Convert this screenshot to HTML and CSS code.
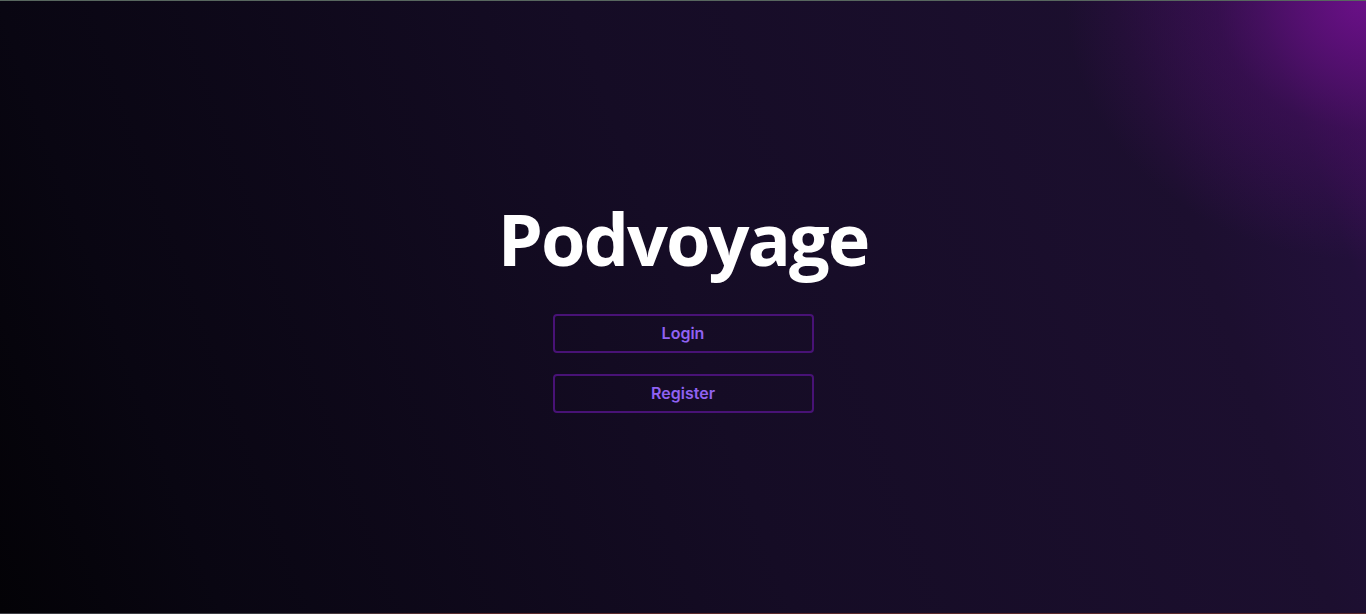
FILE: index.html
```html
<!DOCTYPE html>
<html lang="en">
<head>
<meta charset="utf-8">
<title>Podvoyage</title>
<link rel="stylesheet" href="styles.css">
</head>
<body>
<div class="page">
  <div class="topline"></div>
  <main class="hero">
    <h1 class="title">Podvoyage</h1>
    <div class="actions">
      <button class="btn">Login</button>
      <button class="btn">Register</button>
    </div>
  </main>
  <div class="bottomline"></div>
</div>
</body>
</html>
```

FILE: styles.css
```css
html, body {
  margin: 0;
  padding: 0;
  height: 100%;
}
body {
  background: #050408;
  font-family: "Open Sans", "Noto Sans", sans-serif;
}
.page {
  height: 100vh;
  display: flex;
  flex-direction: column;
  background:
    radial-gradient(ellipse 300px 260px at 100% 0%, rgba(115, 16, 145, 0.85), rgba(85, 14, 112, 0.4) 50%, rgba(60, 10, 90, 0) 100%),
    linear-gradient(70deg, #030206 0%, #090612 14%, #150c25 50%, #1c0f2f 84%, #22103a 93%, #3a0f55 100%);
}
.topline {
  height: 1px;
  background: #58675f;
  flex: none;
}
.bottomline {
  height: 1px;
  flex: none;
  background: linear-gradient(to right, #3d3d42 0%, #3d3d42 20%, #5a2a2c 35%, #5a2a2c 100%);
}
.hero {
  flex: 1;
  display: flex;
  flex-direction: column;
  align-items: center;
  justify-content: center;
}
.title {
  margin: 0 0 40px;
  font-size: 72px;
  line-height: 72px;
  font-weight: 700;
  color: #ffffff;
  letter-spacing: -2px;
}
.actions {
  display: flex;
  flex-direction: column;
  gap: 21px;
}
.btn {
  width: 261px;
  height: 39px;
  box-sizing: border-box;
  background: transparent;
  border: 2px solid #481276;
  border-radius: 4px;
  color: #9062f2;
  font-family: Inter, "Noto Sans", sans-serif;
  font-size: 16px;
  font-weight: 600;
  cursor: pointer;
}
```
